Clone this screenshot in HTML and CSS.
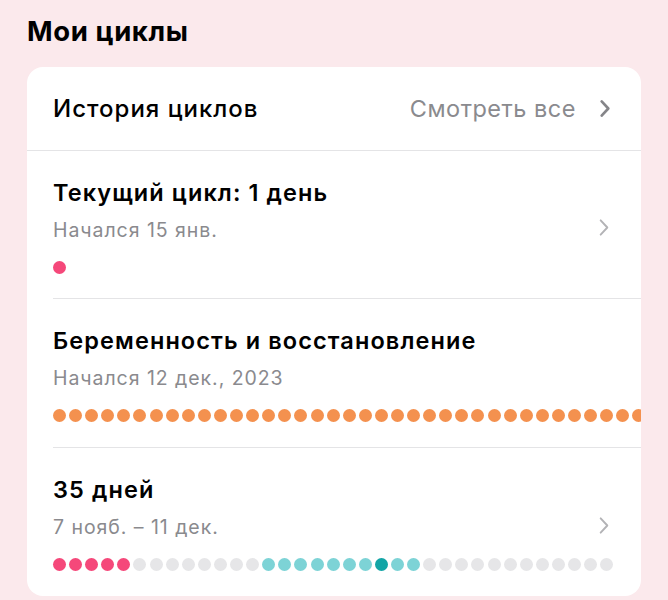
FILE: index.html
```html
<!DOCTYPE html>
<html lang="ru">
<head>
<meta charset="utf-8">
<link rel="stylesheet" href="styles.css">
</head>
<body>
<div class="page">
  <h1 class="heading">Мои циклы</h1>
  <div class="card">
    <div class="row-head">
      <span class="head-title">История циклов</span>
      <span class="head-link">Смотреть все</span>
      <svg class="chev chev-dark" viewBox="0 0 12 20" width="12" height="19"><path d="M2.5 2.5 L9.5 10 L2.5 17.5"/></svg>
    </div>

    <div class="row">
      <div class="row-inner">
        <div class="info">
          <div class="title">Текущий цикл: 1 день</div>
          <div class="sub">Начался 15 янв.</div>
          <div class="dots"><i class="d p"></i></div>
        </div>
        <svg class="chev chev-light" viewBox="0 0 12 20" width="12" height="19"><path d="M2.5 2.5 L9.5 10 L2.5 17.5"/></svg>
      </div>
    </div>

    <div class="row tall">
      <div class="row-inner">
        <div class="info">
          <div class="title">Беременность и восстановление</div>
          <div class="sub">Начался 12 дек., 2023</div>
          <div class="dots" id="orange"></div>
        </div>
      </div>
    </div>

    <div class="row last">
      <div class="row-inner">
        <div class="info">
          <div class="title">35 дней</div>
          <div class="sub">7 нояб. – 11 дек.</div>
          <div class="dots">
            <i class="d p"></i><i class="d p"></i><i class="d p"></i><i class="d p"></i><i class="d p"></i>
            <i class="d g"></i><i class="d g"></i><i class="d g"></i><i class="d g"></i><i class="d g"></i><i class="d g"></i><i class="d g"></i><i class="d g"></i>
            <i class="d t"></i><i class="d t"></i><i class="d t"></i><i class="d t"></i><i class="d t"></i><i class="d t"></i><i class="d t"></i><i class="d td"></i><i class="d t"></i><i class="d t"></i>
            <i class="d g"></i><i class="d g"></i><i class="d g"></i><i class="d g"></i><i class="d g"></i><i class="d g"></i><i class="d g"></i><i class="d g"></i><i class="d g"></i><i class="d g"></i><i class="d g"></i><i class="d g"></i>
          </div>
        </div>
        <svg class="chev chev-light" viewBox="0 0 12 20" width="12" height="19"><path d="M2.5 2.5 L9.5 10 L2.5 17.5"/></svg>
      </div>
    </div>
  </div>
</div>
<script>
  var o = document.getElementById('orange');
  for (var i = 0; i < 40; i++) { var e = document.createElement('i'); e.className = 'd o'; o.appendChild(e); }
</script>
</body>
</html>
```
FILE: styles.css
```css
* { box-sizing: border-box; }
html, body { margin: 0; padding: 0; }
body {
  background: #fbe9ec;
  font-family: Inter, "Noto Sans", "DejaVu Sans", sans-serif;
  color: #000;
  width: 668px;
  height: 600px;
  overflow: hidden;
}
.page { padding: 15px 27px 0; }
.heading {
  margin: 0 0 20px;
  font-size: 27.5px;
  line-height: 32px;
  font-weight: 700;
  letter-spacing: 0.6px;
}
.card {
  background: #fff;
  border-radius: 16px;
  overflow: hidden;
}
.row-head {
  height: 84px;
  display: flex;
  align-items: center;
  padding-left: 26px;
  border-bottom: 1px solid #e4e4e6;
}
.head-title {
  font-size: 24px;
  font-weight: 500;
  flex: 1;
  letter-spacing: 1px;
}
.head-link {
  font-size: 23.5px;
  color: #8a8a8e;
  letter-spacing: 0.5px;
}
.chev { fill: none; stroke-linecap: round; stroke-linejoin: round; flex: none; }
.chev-dark { stroke: #858589; stroke-width: 2.8; margin: 0 30px 0 23px; }
.chev-light { stroke: #b3b3b6; stroke-width: 2; margin: 6px 31px 0 16px; }
.row { padding-left: 26px; }
.row-inner {
  display: flex;
  align-items: center;
  border-bottom: 1px solid #e4e4e6;
  height: 148px;
}
.row.tall .row-inner { height: 149px; }
.row.last .row-inner { border-bottom: none; }
.info { flex: 1; min-width: 0; padding-top: 28px; height: 100%; }
.title {
  font-size: 23.5px;
  line-height: 28px;
  font-weight: 600;
  letter-spacing: 1.1px;
  white-space: nowrap;
}
.sub {
  margin-top: 11px;
  font-size: 19.5px;
  line-height: 24px;
  color: #8a8a8e;
  letter-spacing: 0.95px;
  white-space: nowrap;
}
.dots {
  margin-top: 19px;
  display: flex;
  height: 13px;
}
.d { flex: none; display: block; width: 13px; height: 13px; border-radius: 50%; margin-right: 3.1px; }
.p { background: #f5487a; }
.g { background: #e6e6e8; }
.t { background: #7dd3d6; }
.td { background: #12a5a6; }
.o { background: #f4914f; }
```
